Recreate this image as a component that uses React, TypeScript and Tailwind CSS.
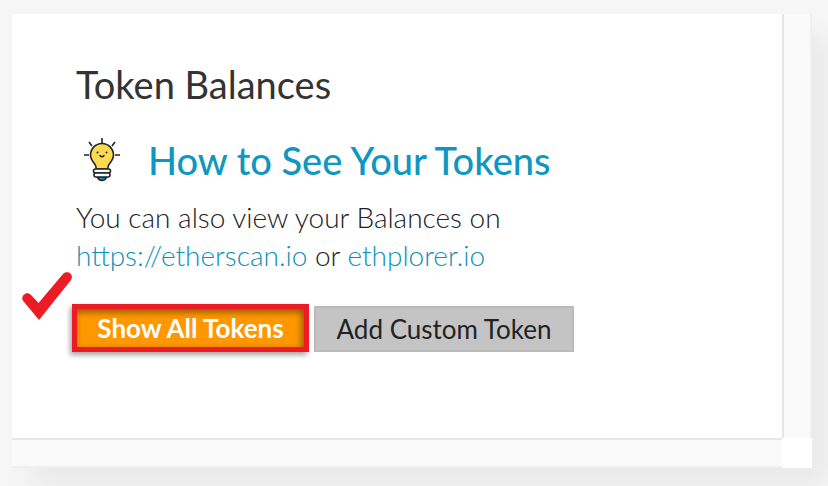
function BulbIcon() {
  return (
    <svg viewBox="0 0 40 46" className="h-[46px] w-10 shrink-0" fill="none" aria-hidden="true">
      <g stroke="#1d2429" strokeWidth="1.6">
        <path d="M20 1v5M7 5l3 4M33 5l-3 4M2 18h5M33 18h5" />
        <path d="M15 40h10l-2 2.500q-3 2-6 0z" fill="#0e97c0" />
        <path d="M14 32v-2c0-3-5.500-6-5.500-12a11.500 11.500 0 0 1 23 0c0 6-5.500 9-5.500 12v2z" fill="#ffd94f" />
        <rect x="11.500" y="32" width="17" height="4" rx="2" fill="#fff" />
        <rect x="12" y="36" width="16" height="4" rx="2" fill="#fff" />
      </g>
      <path d="M18 18.500q2 2.500 4 0" stroke="#1d2429" strokeWidth="1.500" strokeLinecap="round" />
      <circle cx="15.500" cy="15.500" r="1" fill="#1d2429" />
      <circle cx="24.500" cy="15.500" r="1" fill="#1d2429" />
    </svg>
  );
}

function CheckMark() {
  return (
    <svg viewBox="0 0 54 52" className="absolute -top-[34px] -left-[52px] h-[52px] w-[54px]" aria-hidden="true">
      <path
        d="M2.800 30.500C.5 26 6.500 20.500 11 25L18.500 33 43 4C47-.5 54.500 4 51 10L19 50z"
        fill="#ed1c24"
      />
    </svg>
  );
}

export default function App() {
  return (
    <div className="min-h-screen overflow-hidden bg-[#f6f6f6] pt-3.5 pr-4 pl-3 font-['Lato',sans-serif] text-[#333]">
      <main className="grid grid-cols-[1fr_28px] grid-rows-[auto_28px] shadow-[18px_20px_26px_rgba(0,0,0,0.05)]">
        <section className="border-r-2 border-b-2 border-[#e6e6e6] bg-white px-16 pt-[46px] pb-[86px]">
          <h1 className="text-[38px] leading-[48px]">Token Balances</h1>
          <div className="mt-[26px] flex items-center gap-[26px] pl-1.5">
            <BulbIcon />
            <h2 className="text-[38px] leading-[52px] font-medium whitespace-nowrap">
              <a href="#help" className="text-[#0e97c0]">How to See Your Tokens</a>
            </h2>
          </div>
          <p className="mt-3 text-[28px] leading-[38px] font-light text-[#222]">
            You can also view your Balances on
            <br />
            <a href="https://etherscan.io" className="text-[#0e8fb8]">https://etherscan.io</a> or{" "}
            <a href="https://ethplorer.io" className="text-[#0e8fb8]">ethplorer.io</a>
          </p>
          <div className="relative mt-[30px] -ml-1 flex items-end gap-[5px]">
            <CheckMark />
            <button type="button" className="h-12 w-[237px] border-5 border-[#ed1c24] bg-[#ff9800] text-[26px] leading-8 font-bold whitespace-nowrap text-white shadow-[-2px_3px_5px_rgba(0,0,0,0.35),inset_-2px_3px_7px_rgba(0,0,0,0.45)]">
              Show All Tokens
            </button>
            <button type="button" className="h-[46px] w-[260px] border-2 border-[#bbb] bg-[#c4c4c4] text-[26px] leading-8 whitespace-nowrap text-[#222]">
              Add Custom Token
            </button>
          </div>
        </section>
        <div className="border-r-2 border-[#f0f0f0] bg-[#fafafa]" />
        <div className="border-b-2 border-[#f0f0f0] bg-[#fafafa]" />
        <div className="-mt-0.5 -ml-0.5 bg-white" />
      </main>
    </div>
  );
}
